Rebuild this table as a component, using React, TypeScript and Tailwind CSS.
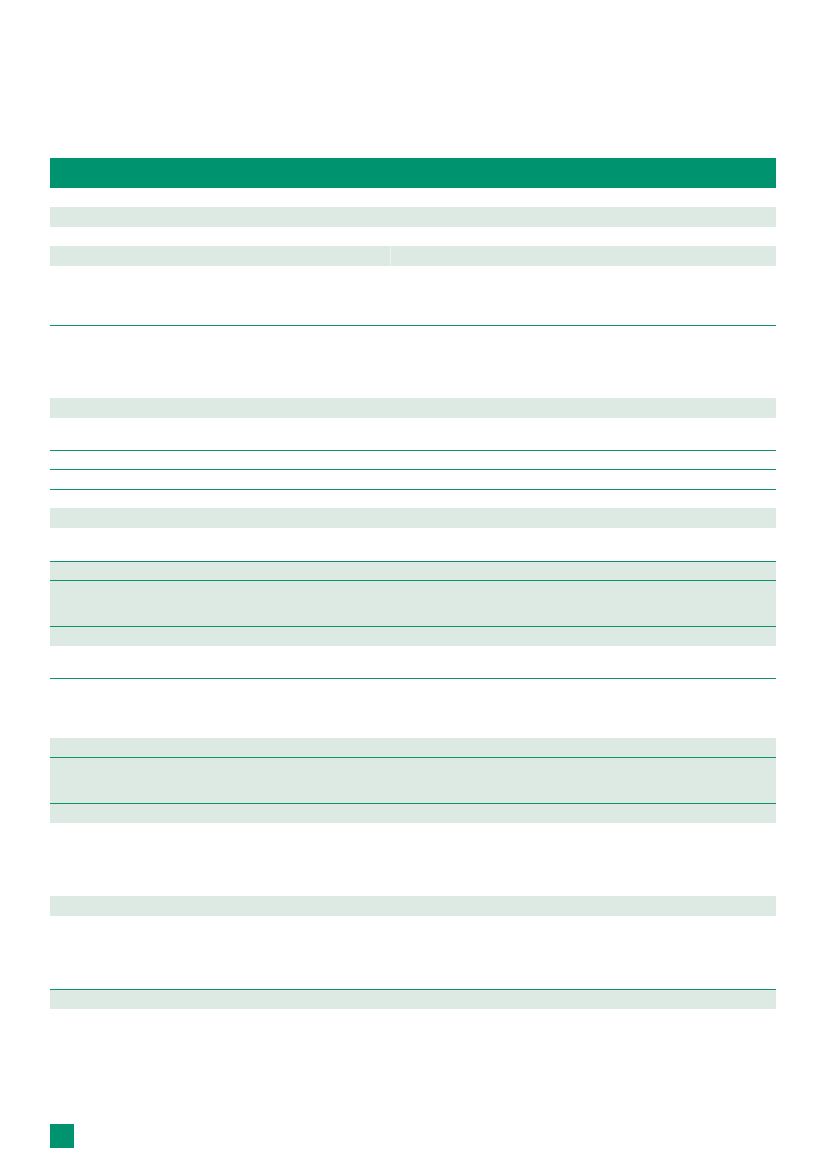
type Row = { h: string; bg: string; line?: boolean; split?: boolean };

// rows of the empty table, top to bottom
const rows: Row[] = [
  { h: 'h-[19px]', bg: 'bg-white' },
  { h: 'h-[20px]', bg: 'bg-[#dceae3]' },
  { h: 'h-[19px]', bg: 'bg-white' },
  { h: 'h-[20px]', bg: 'bg-[#dceae3]', split: true },
  { h: 'h-[60px]', bg: 'bg-white', line: true },
  { h: 'h-[72px]', bg: 'bg-white' },
  { h: 'h-[20px]', bg: 'bg-[#dceae3]' },
  { h: 'h-[33px]', bg: 'bg-white', line: true },
  { h: 'h-[19px]', bg: 'bg-white', line: true },
  { h: 'h-[20px]', bg: 'bg-white', line: true },
  { h: 'h-[18px]', bg: 'bg-white' },
  { h: 'h-[20px]', bg: 'bg-[#dceae3]' },
  { h: 'h-[34px]', bg: 'bg-white', line: true },
  { h: 'h-[19px]', bg: 'bg-[#dceae3]', line: true },
  { h: 'h-[46px]', bg: 'bg-[#dceae3]', line: true },
  { h: 'h-[19px]', bg: 'bg-[#dceae3]' },
  { h: 'h-[33px]', bg: 'bg-white', line: true },
  { h: 'h-[59px]', bg: 'bg-white' },
  { h: 'h-[20px]', bg: 'bg-[#dceae3]', line: true },
  { h: 'h-[46px]', bg: 'bg-[#dceae3]', line: true },
  { h: 'h-[19px]', bg: 'bg-[#dceae3]' },
  { h: 'h-[73px]', bg: 'bg-white' },
  { h: 'h-[20px]', bg: 'bg-[#dceae3]' },
  { h: 'h-[74px]', bg: 'bg-white', line: true },
  { h: 'h-[19px]', bg: 'bg-[#dceae3]' },
];

function TableRow({ row }: { row: Row }) {
  const cell = `${row.h} ${row.bg} ${row.line ? 'border-b border-[#0f906e]' : ''}`;
  return (
    <div className="grid grid-cols-[340px_297px_89px]">
      <div className={cell} />
      <div className={`${cell} ${row.split ? 'border-l border-l-[#eef5f1]' : ''}`} />
      <div className={cell} />
    </div>
  );
}

export default function App() {
  return (
    <div className="relative h-[1169px] w-[827px] bg-white font-['Liberation_Sans',sans-serif]">
      <div className="flex flex-col pl-[50px] pt-[158px]">
        <div className="w-[726px]">
          <div className="grid h-[30px] grid-cols-[340px_297px_89px] bg-[#009370]">
            <div />
            <div />
            <div />
          </div>
          {rows.map((row, i) => (
            <TableRow key={i} row={row} />
          ))}
        </div>
        <div className="mt-[115px] h-[24px] w-[24px] bg-[#009370]" />
      </div>
    </div>
  );
}
